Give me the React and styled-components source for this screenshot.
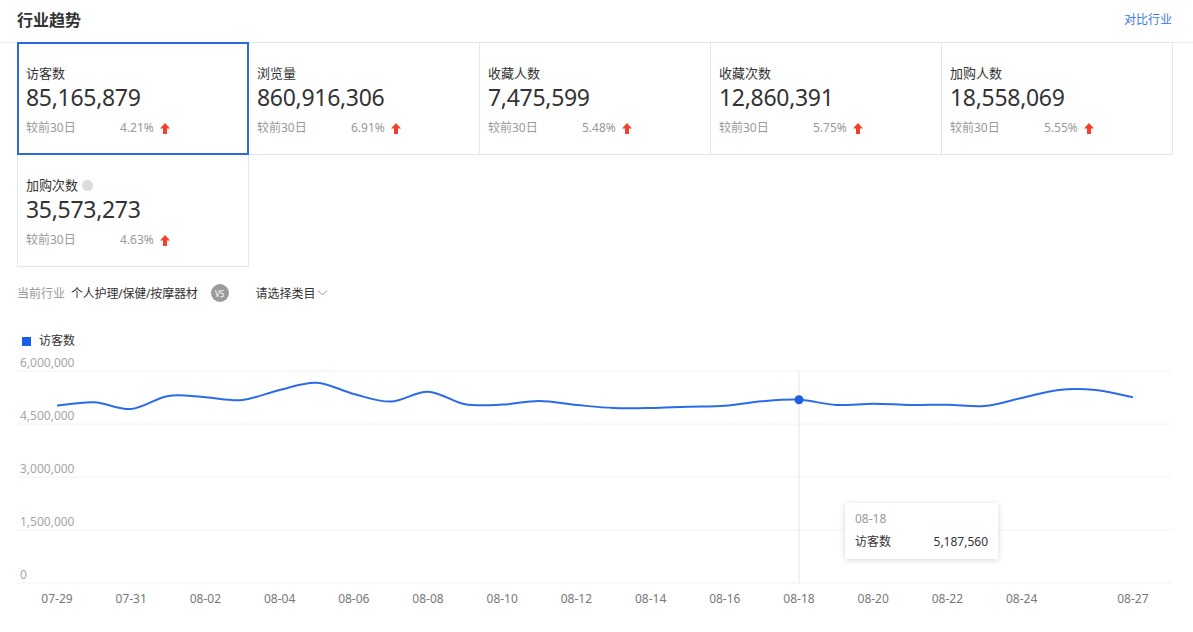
import React from 'react';
import styled, { createGlobalStyle } from 'styled-components';

const GlobalStyle = createGlobalStyle`
    body {
        margin: 0;
        background: #fff;
        font-family: "Noto Sans", "Noto Sans CJK SC", sans-serif;
        color: #333;
    }
`;

const Page = styled.div`
    width: 1193px;
`;

const Header = styled.div`
    height: 42px;
    border-bottom: 1px solid #e9ebef;
    padding: 0 21px 0 17px;
    display: flex;
    align-items: center;
    justify-content: space-between;
`;

const Title = styled.div`
    font-size: 16px;
    font-weight: 700;
    color: #333;
    margin-top: -5px;
`;

const CompareLink = styled.a`
    font-size: 12px;
    color: #3d77ea;
    cursor: pointer;
    margin-top: -5px;
`;

const Body = styled.div`
    padding: 0 21px 0 17px;
`;

const CardGrid = styled.div`
    display: grid;
    grid-template-columns: repeat(5, 231px);
    grid-auto-rows: 112px;
    margin-top: -1px;
`;

const Card = styled.div`
    position: relative;
    margin: 0 -1px -1px 0;
    border: 1px solid ${props => props.$active ? '#2c69e0' : '#e0e6ee'};
    box-shadow: ${props => props.$active ? 'inset 0 0 0 1px #2c69e0' : 'none'};
    z-index: ${props => props.$active ? 1 : 0};
    padding: 21px 8px 0 8px;
    box-sizing: border-box;
`;

const CardLabel = styled.div`
    font-size: 13px;
    line-height: 18px;
    color: #333;
    display: flex;
    align-items: center;
    gap: 4px;
`;

const HelpDot = styled.span`
    width: 11px;
    height: 11px;
    border-radius: 50%;
    background: #dcdcdc;
    display: inline-block;
`;

const CardValue = styled.div`
    font-size: 23px;
    line-height: 30px;
    color: #333;
    letter-spacing: -0.3px;
`;

const CardFooter = styled.div`
    margin-top: 8px;
    display: flex;
    align-items: center;
    font-size: 12px;
    line-height: 16px;
    color: #999;
`;

const FooterLabel = styled.span`
    width: 94px;
`;

const Rate = styled.span`
    display: flex;
    align-items: center;
    gap: 6px;
`;

const FilterRow = styled.div`
    margin-top: 17px;
    height: 20px;
    display: flex;
    align-items: center;
    font-size: 12px;
`;

const FilterKey = styled.span`
    color: #999;
    margin-right: 6px;
`;

const FilterValue = styled.span`
    color: #333;
    letter-spacing: -0.2px;
`;

const VsBadge = styled.span`
    width: 18px;
    height: 18px;
    border-radius: 50%;
    background: #9b9b9b;
    color: #fff;
    font-size: 8px;
    display: flex;
    align-items: center;
    justify-content: center;
    margin: 0 27px 0 13px;
`;

const CategorySelect = styled.span`
    display: flex;
    align-items: center;
    gap: 1px;
    color: #333;
    cursor: pointer;
`;

const Legend = styled.div`
    margin-top: 30px;
    margin-left: 5px;
    display: flex;
    align-items: center;
    gap: 8px;
    font-size: 12px;
    line-height: 16px;
    color: #333;
`;

const LegendSwatch = styled.span`
    width: 9px;
    height: 9px;
    background: #1b5fe8;
`;

const ChartWrap = styled.div`
    position: relative;
    margin-top: 6px;
    width: 1155px;
    height: 265px;
`;

const Tooltip = styled.div`
    position: absolute;
    left: 828px;
    top: 148px;
    width: 153px;
    box-sizing: border-box;
    padding: 7px 10px 8px 10px;
    background: #fff;
    box-shadow: 0 1px 6px rgba(0, 0, 0, 0.16);
    font-size: 12px;
`;

const TipDate = styled.div`
    color: #999;
    line-height: 18px;
`;

const TipRow = styled.div`
    margin-top: 5px;
    display: flex;
    justify-content: space-between;
    color: #333;
    line-height: 18px;
`;

const UpArrow = () => (
    <svg width="10" height="11" viewBox="0 0 10 11">
        <path d="M5 0 L10 5.5 H7 V11 H3 V5.5 H0 Z" fill="#f2402d" />
    </svg>
);

const Chevron = () => (
    <svg width="11" height="8" viewBox="0 0 11 8">
        <path d="M1 1.5 L5.5 6 L10 1.5" fill="none" stroke="#999" strokeWidth="1" />
    </svg>
);

const METRICS = [
    { label: '访客数', value: '85,165,879', rate: '4.21%', active: true },
    { label: '浏览量', value: '860,916,306', rate: '6.91%' },
    { label: '收藏人数', value: '7,475,599', rate: '5.48%' },
    { label: '收藏次数', value: '12,860,391', rate: '5.75%' },
    { label: '加购人数', value: '18,558,069', rate: '5.55%' },
    { label: '加购次数', value: '35,573,273', rate: '4.63%', help: true },
];

const DATES = [
    '07-29', '07-30', '07-31', '08-01', '08-02', '08-03', '08-04', '08-05', '08-06', '08-07',
    '08-08', '08-09', '08-10', '08-11', '08-12', '08-13', '08-14', '08-15', '08-16', '08-17',
    '08-18', '08-19', '08-20', '08-21', '08-22', '08-23', '08-24', '08-25', '08-26', '08-27',
];

const VISITORS = [
    5018320, 5115402, 4925114, 5293650, 5256008, 5180233, 5463190, 5669027, 5350412, 5132580,
    5415331, 5058209, 5047713, 5151046, 5038221, 4953410, 4953902, 4990175, 5018634, 5143208,
    5187560, 5038447, 5075120, 5038009, 5047332, 5010286, 5236115, 5463420, 5463001, 5256730,
];

const X0 = 40;
const STEP = 37.1;
const Y_ZERO = 228;
const Y_TOP = 16;
const MAX = 6000000;

const px = i => X0 + i * STEP;
const py = v => Y_ZERO - (v / MAX) * (Y_ZERO - Y_TOP);

// catmull-rom -> cubic bezier
const smoothPath = (pts) => {
    let d = `M${pts[0][0]},${pts[0][1]}`;
    const t = 0.5 / 3;
    for (let i = 0; i < pts.length - 1; i++) {
        const p0 = pts[i - 1] || pts[i];
        const p1 = pts[i];
        const p2 = pts[i + 1];
        const p3 = pts[i + 2] || p2;
        const c1x = p1[0] + (p2[0] - p0[0]) * t;
        const c1y = p1[1] + (p2[1] - p0[1]) * t;
        const c2x = p2[0] - (p3[0] - p1[0]) * t;
        const c2y = p2[1] - (p3[1] - p1[1]) * t;
        d += ` C${c1x.toFixed(1)},${c1y.toFixed(1)} ${c2x.toFixed(1)},${c2y.toFixed(1)} ${p2[0].toFixed(1)},${p2[1].toFixed(1)}`;
    }
    return d;
};

const Y_TICKS = ['6,000,000', '4,500,000', '3,000,000', '1,500,000', '0'];
const X_TICKS = [0, 2, 4, 6, 8, 10, 12, 14, 16, 18, 20, 22, 24, 26, 29];
const HOVER = 20;

const TrendChart = () => {
    const pts = VISITORS.map((v, i) => [px(i), py(v)]);
    return (
        <ChartWrap>
            <svg width="1155" height="265" style={{ display: 'block' }}>
                {Y_TICKS.map((label, i) => {
                    const y = Y_TOP + i * (Y_ZERO - Y_TOP) / 4;
                    return (
                        <g key={label}>
                            <line x1="0" x2="1155" y1={y} y2={y} stroke="#f1f2f6" strokeWidth="1" />
                            <text x="3" y={y - 4} fontSize="12" fill="#a6a6a6">{label}</text>
                        </g>
                    );
                })}
                <line x1={px(HOVER)} x2={px(HOVER)} y1={Y_TOP} y2={Y_ZERO} stroke="#eceef2" strokeWidth="1.5" />
                <path d={smoothPath(pts)} fill="none" stroke="#2a6ce8" strokeWidth="2" />
                <circle cx={px(HOVER)} cy={py(VISITORS[HOVER])} r="4.5" fill="#1d5fe6" />
                {X_TICKS.map(i => (
                    <text key={i} x={px(i)} y="248" fontSize="12" fill="#777" textAnchor="middle">{DATES[i]}</text>
                ))}
            </svg>
            <Tooltip>
                <TipDate>{DATES[HOVER]}</TipDate>
                <TipRow>
                    <span>访客数</span>
                    <span>{VISITORS[HOVER].toLocaleString('en-US')}</span>
                </TipRow>
            </Tooltip>
        </ChartWrap>
    );
};

const App = () => {
    return (
        <Page>
            <GlobalStyle />
            <Header>
                <Title>行业趋势</Title>
                <CompareLink>对比行业</CompareLink>
            </Header>
            <Body>
                <CardGrid>
                    {METRICS.map(m => (
                        <Card key={m.label} $active={m.active}>
                            <CardLabel>
                                {m.label}
                                {m.help && <HelpDot />}
                            </CardLabel>
                            <CardValue>{m.value}</CardValue>
                            <CardFooter>
                                <FooterLabel>较前30日</FooterLabel>
                                <Rate>{m.rate} <UpArrow /></Rate>
                            </CardFooter>
                        </Card>
                    ))}
                </CardGrid>
                <FilterRow>
                    <FilterKey>当前行业</FilterKey>
                    <FilterValue>个人护理/保健/按摩器材</FilterValue>
                    <VsBadge>VS</VsBadge>
                    <CategorySelect>请选择类目<Chevron /></CategorySelect>
                </FilterRow>
                <Legend>
                    <LegendSwatch />
                    访客数
                </Legend>
                <TrendChart />
            </Body>
        </Page>
    );
};

export default App;
